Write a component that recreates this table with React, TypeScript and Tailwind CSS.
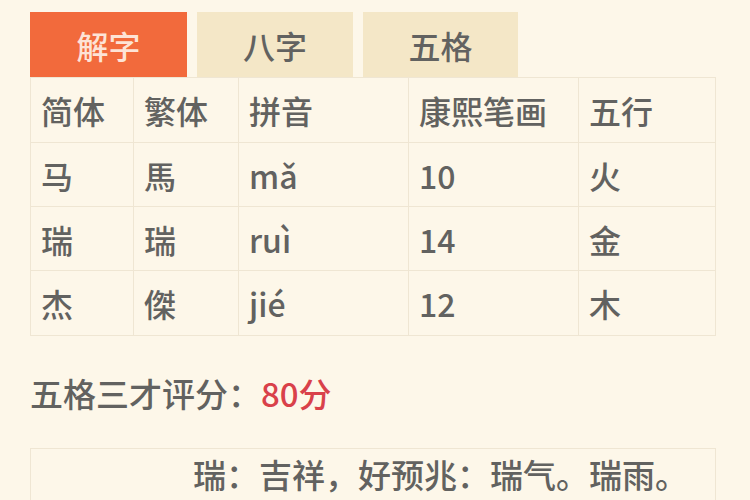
import React from 'react';

type Row = { jian: string; fan: string; pinyin: string; strokes: string; wuxing: string };

const rows: Row[] = [
  { jian: '马', fan: '馬', pinyin: 'mǎ', strokes: '10', wuxing: '火' },
  { jian: '瑞', fan: '瑞', pinyin: 'ruì', strokes: '14', wuxing: '金' },
  { jian: '杰', fan: '傑', pinyin: 'jié', strokes: '12', wuxing: '木' },
];

const headers = ['简体', '繁体', '拼音', '康熙笔画', '五行'];
const cols = 'grid grid-cols-[103px_105px_170px_170px_138px]';
const font = { fontFamily: '"Noto Sans CJK SC", "Noto Sans", sans-serif' };

export default function App() {
  return (
    <div className="w-[750px] h-[500px] overflow-hidden bg-[#fdf7e9] text-[#626260] font-medium" style={font}>
      <div className="pt-3 pl-[30px]">
        {/* Tabs */}
        <div className="flex gap-[10px] h-[65px] text-[32px]">
          <div className="w-[157px] flex items-center justify-center bg-[#f26a3c] text-[#fde3d6]">解字</div>
          <div className="w-[156px] flex items-center justify-center bg-[#f4e7c7]">八字</div>
          <div className="w-[155px] flex items-center justify-center bg-[#f4e7c7]">五格</div>
        </div>

        {/* Table */}
        <div className="w-[686px] border border-[#efe6d3] text-[32px]">
          <div className={`${cols} h-[65px] border-b border-[#efe6d3]`}>
            {headers.map((h, i) => (
              <div key={h} className={`flex items-center pl-[10px] ${i < 4 ? 'border-r border-[#efe6d3]' : ''}`}>{h}</div>
            ))}
          </div>
          {rows.map((r, ri) => (
            <div key={r.jian} className={`${cols} h-[64px] ${ri < 2 ? 'border-b border-[#efe6d3]' : ''}`}>
              {[r.jian, r.fan, r.pinyin, r.strokes, r.wuxing].map((c, i) => (
                <div key={i} className={`flex items-center pl-[10px] ${i < 4 ? 'border-r border-[#efe6d3]' : ''}`}>{c}</div>
              ))}
            </div>
          ))}
        </div>

        {/* Score */}
        <div className="mt-[36px] text-[33px] leading-[42px]">
          五格三才评分：<span className="text-[#d9414a]">80分</span>
        </div>

        {/* Explanation */}
        <div className="mt-[34px] w-[686px] h-[80px] border border-[#efe6d3] pl-[162px] pt-[4px] text-[33px] leading-[42px]">
          瑞：吉祥，好预兆：瑞气。瑞雨。
        </div>
      </div>
    </div>
  );
}
